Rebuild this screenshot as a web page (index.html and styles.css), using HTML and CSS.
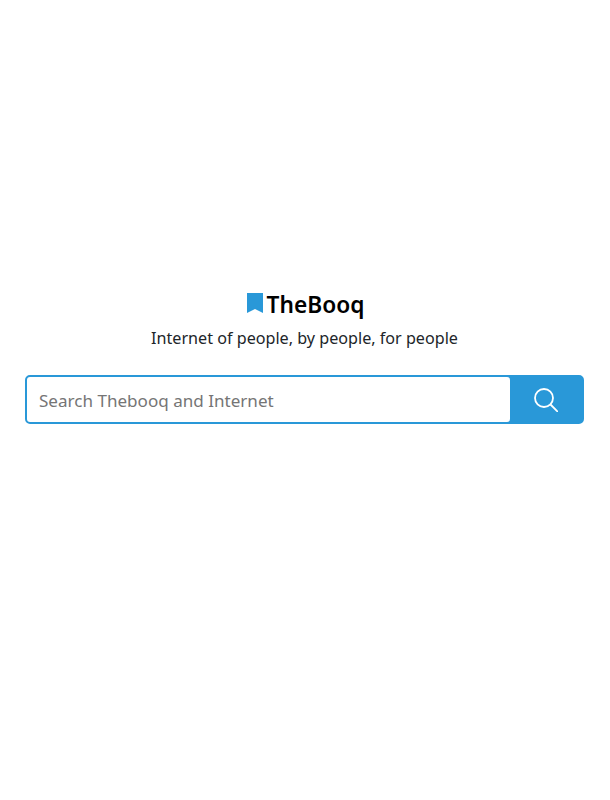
FILE: index.html
```html
<!DOCTYPE html>
<html lang="en">
<head>
    <meta charset="UTF-8">
    <meta name="viewport" content="width=device-width, initial-scale=1.0">
    <title>TheBooq</title>
    <link rel="stylesheet" href="styles.css">
</head>
<body>
    <div class="home">
        <div class="logo">
            <svg class="logo-icon" width="16" height="20" viewBox="0 0 16 20">
                <path d="M0 0H16V20L8 16L0 20Z" fill="#2998d8"/>
            </svg>
            <span class="logo-name">TheBooq</span>
        </div>
        <div class="tagline">Internet of people, by people, for people</div>
        <form class="search">
            <input class="search-input" type="text" placeholder="Search Thebooq and Internet">
            <button class="search-btn" type="button" aria-label="Search">
                <svg width="24" height="24" viewBox="0 0 24 24" fill="none" stroke="#fff" stroke-width="1.8">
                    <circle cx="10" cy="10" r="9"/>
                    <path d="M16.5 16.5L24 24"/>
                </svg>
            </button>
        </form>
    </div>
</body>
</html>
```

FILE: styles.css
```css
* {
    margin: 0;
    padding: 0;
    box-sizing: border-box;
}
body {
    background-color: #fff;
    font-family: "Noto Sans", sans-serif;
    color: #212529;
}
.home {
    display: flex;
    flex-direction: column;
    align-items: center;
    padding: 292px 26px 0 25px;
}
.logo {
    display: flex;
    align-items: center;
    gap: 4px;
    height: 24px;
    padding-left: 2px;
}
.logo-icon {
    margin-bottom: 2px;
}
.logo-name {
    font-size: 22.7px;
    font-weight: 600;
    color: #000;
}
.tagline {
    margin-top: 10px;
    font-size: 16.15px;
    line-height: 24px;
}
.search {
    display: flex;
    width: 100%;
    height: 49px;
    margin-top: 25px;
    border: 2px solid #2998d8;
    border-radius: 5px;
    background-color: #2998d8;
}
.search-input {
    flex: 1;
    min-width: 0;
    padding: 2px 12px 0;
    border: 0;
    border-radius: 3px;
    outline: none;
    font: 17.07px "Noto Sans", sans-serif;
    color: #212529;
}
.search-input::placeholder {
    color: #757575;
    opacity: 1;
}
.search-btn {
    display: flex;
    align-items: center;
    justify-content: center;
    width: 72px;
    border: 0;
    background-color: #2998d8;
}
```
